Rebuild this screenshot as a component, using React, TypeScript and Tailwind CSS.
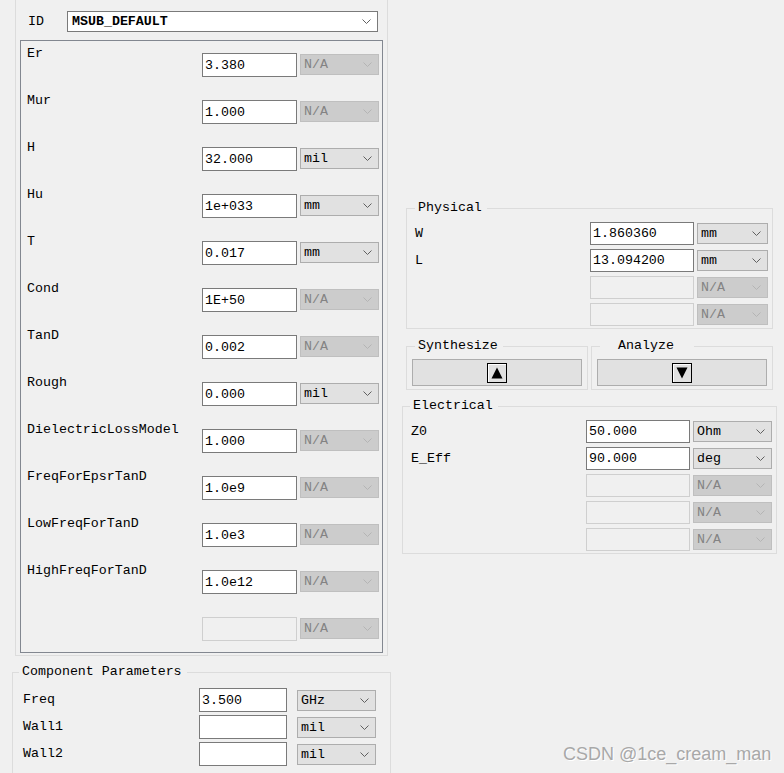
import React from "react";

const Chevron = ({ disabled }: { disabled?: boolean }) => (
  <svg width="9" height="5" viewBox="0 0 9 5" className="shrink-0">
    <polyline
      points="0.5,0.5 4.5,4.5 8.5,0.5"
      fill="none"
      stroke={disabled ? "#b4b4b4" : "#606060"}
      strokeWidth="1"
    />
  </svg>
);

const Drop = ({ value, disabled, className }: { value: string; disabled?: boolean; className: string }) => (
  <div
    className={
      "flex items-center justify-between h-[21px] pl-[3px] pr-[6px] border " +
      (disabled ? "bg-[#cccccc] border-[#bfbfbf] text-[#838383] " : "bg-[#e1e1e1] border-[#adadad] text-black ") +
      className
    }
  >
    <span className="pt-[1px]">{value}</span>
    <Chevron disabled={disabled} />
  </div>
);

const Field = ({ value, className, h }: { value?: string; className: string; h: string }) => (
  <div
    className={
      "flex items-center pl-[2px] pt-[1px] border " +
      (value !== undefined ? "bg-white border-[#7a7a7a] " : "bg-[#f0f0f0] border-[#cfcfcf] ") +
      h +
      " " +
      className
    }
  >
    {value}
  </div>
);

const subRows: [string, string, string, boolean][] = [
  ["Er", "3.380", "N/A", true],
  ["Mur", "1.000", "N/A", true],
  ["H", "32.000", "mil", false],
  ["Hu", "1e+033", "mm", false],
  ["T", "0.017", "mm", false],
  ["Cond", "1E+50", "N/A", true],
  ["TanD", "0.002", "N/A", true],
  ["Rough", "0.000", "mil", false],
  ["DielectricLossModel", "1.000", "N/A", true],
  ["FreqForEpsrTanD", "1.0e9", "N/A", true],
  ["LowFreqForTanD", "1.0e3", "N/A", true],
  ["HighFreqForTanD", "1.0e12", "N/A", true],
];

const ArrowBox = ({ up }: { up?: boolean }) => (
  <div className="w-[20px] h-[20px] border border-black bg-[#e1e1e1] shadow-[inset_1px_1px_0_#ffffff] flex items-center justify-center">
    <svg width="12" height="12" viewBox="0 0 12 12">
      {up ? <polygon points="6,0.5 11.5,11.5 0.5,11.5" fill="black" /> : <polygon points="0.5,0.5 11.5,0.5 6,11.5" fill="black" />}
    </svg>
  </div>
);

export default function App() {
  return (
    <div className="relative w-[784px] h-[773px] overflow-hidden bg-[#f0f0f0] text-black font-['Liberation_Mono',monospace] text-[13.3px] leading-[16px]">
      <div className="flex">
        {/* Left column */}
        <div className="w-[391px] shrink-0">
          <div className="ml-[15px] w-[373px] h-[656px] border-x border-b border-[#dcdcdc]">
            <div className="flex items-center pt-[11px]">
              <div className="w-[51px] pl-[12px]">ID</div>
              <div className="w-[311px] h-[21px] bg-white border border-[#7a7a7a] flex items-center justify-between pl-[4px] pr-[6px]">
                <span className="font-bold pt-[1px]">MSUB_DEFAULT</span>
                <Chevron />
              </div>
            </div>
            <div className="ml-[4px] mt-[8px] w-[363px] h-[613px] border border-[#828790] pt-[5px]">
              {subRows.map(([label, val, unit, dis]) => (
                <div key={label} className="flex items-start h-[47px]">
                  <div className="w-[181px] pl-[6px]">{label}</div>
                  <div className="flex items-start mt-[7px]">
                    <Field value={val} className="w-[95px]" h="h-[24px]" />
                    <div className="ml-[3px] mt-[1px]">
                      <Drop value={unit} disabled={dis} className="w-[79px]" />
                    </div>
                  </div>
                </div>
              ))}
              <div className="flex items-start">
                <div className="w-[181px]" />
                <div className="flex items-start mt-[7px]">
                  <Field className="w-[95px]" h="h-[24px]" />
                  <div className="ml-[3px] mt-[1px]">
                    <Drop value="N/A" disabled className="w-[79px]" />
                  </div>
                </div>
              </div>
            </div>
          </div>

          <fieldset className="ml-[12px] mt-[8px] w-[379px] h-[140px] border border-[#dcdcdc]">
            <legend className="ml-[6px] pl-[3px] pr-[5px]">Component Parameters</legend>
            <div className="flex flex-col gap-[3px] pl-[10px] pt-[8px]">
              {[
                ["Freq", "3.500", "GHz"],
                ["Wall1", "", "mil"],
                ["Wall2", "", "mil"],
              ].map(([l, v, u]) => (
                <div key={l} className="flex items-center">
                  <div className="w-[176px]">{l}</div>
                  <Field value={v} className="w-[88px]" h="h-[24px]" />
                  <div className="ml-[10px]">
                    <Drop value={u} className="w-[79px]" />
                  </div>
                </div>
              ))}
            </div>
          </fieldset>
        </div>

        {/* Right column */}
        <div className="flex-1 pt-[200px]">
          <fieldset className="ml-[15px] w-[367px] border border-[#dcdcdc]">
            <legend className="ml-[8px] pl-[3px] pr-[5px]">Physical</legend>
            <div className="flex flex-col gap-[4px] pl-[8px] pt-[6px] pb-[2px]">
              {[
                ["W", "1.860360", "mm"],
                ["L", "13.094200", "mm"],
                ["", undefined, "N/A"],
                ["", undefined, "N/A"],
              ].map(([l, v, u], i) => (
                <div key={i} className="flex items-center">
                  <div className="w-[175px]">{l}</div>
                  <Field value={v} className="w-[104px]" h="h-[23px]" />
                  <div className="ml-[3px]">
                    <Drop value={u as string} disabled={v === undefined} className="w-[71px]" />
                  </div>
                </div>
              ))}
            </div>
          </fieldset>

          <div className="flex mt-[9px]">
            <fieldset className="ml-[15px] w-[182px] border border-[#dcdcdc]">
              <legend className="ml-[8px] pl-[3px] pr-[5px]">Synthesize</legend>
              <div className="pl-[5px] pt-[5px] pb-[3px]">
                <div className="w-[170px] h-[27px] bg-[#e1e1e1] border border-[#adadad] flex items-center justify-center">
                  <ArrowBox up />
                </div>
              </div>
            </fieldset>
            <fieldset className="ml-[3px] w-[182px] border border-[#dcdcdc]">
              <legend className="ml-[8px] pl-[18px] pr-[20px]">Analyze</legend>
              <div className="pl-[5px] pt-[5px] pb-[3px]">
                <div className="w-[170px] h-[27px] bg-[#e1e1e1] border border-[#adadad] flex items-center justify-center">
                  <ArrowBox />
                </div>
              </div>
            </fieldset>
          </div>

          <fieldset className="ml-[11px] mt-[8px] w-[375px] border border-[#dcdcdc]">
            <legend className="ml-[7px] pl-[3px] pr-[5px]">Electrical</legend>
            <div className="flex flex-col gap-[4px] pl-[8px] pt-[6px] pb-[2px]">
              {[
                ["Z0", "50.000", "Ohm"],
                ["E_Eff", "90.000", "deg"],
                ["", undefined, "N/A"],
                ["", undefined, "N/A"],
                ["", undefined, "N/A"],
              ].map(([l, v, u], i) => (
                <div key={i} className="flex items-center">
                  <div className="w-[175px]">{l}</div>
                  <Field value={v} className="w-[104px]" h="h-[23px]" />
                  <div className="ml-[3px]">
                    <Drop value={u as string} disabled={v === undefined} className="w-[79px]" />
                  </div>
                </div>
              ))}
            </div>
          </fieldset>
        </div>
      </div>

      <div className="absolute left-[563px] top-[744px] font-['Liberation_Sans',sans-serif] text-[18px] leading-[20px] text-[#a8a8a8] [text-shadow:1px_1px_0_#ffffff]">
        CSDN @1ce_cream_man
      </div>
    </div>
  );
}
